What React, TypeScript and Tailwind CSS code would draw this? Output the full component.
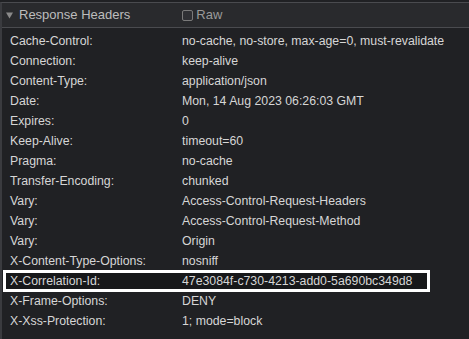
import React from "react";

const rows: [string, string][] = [
  ["Cache-Control:", "no-cache, no-store, max-age=0, must-revalidate"],
  ["Connection:", "keep-alive"],
  ["Content-Type:", "application/json"],
  ["Date:", "Mon, 14 Aug 2023 06:26:03 GMT"],
  ["Expires:", "0"],
  ["Keep-Alive:", "timeout=60"],
  ["Pragma:", "no-cache"],
  ["Transfer-Encoding:", "chunked"],
  ["Vary:", "Access-Control-Request-Headers"],
  ["Vary:", "Access-Control-Request-Method"],
  ["Vary:", "Origin"],
  ["X-Content-Type-Options:", "nosniff"],
  ["X-Correlation-Id:", "47e3084f-c730-4213-add0-5a690bc349d8"],
  ["X-Frame-Options:", "DENY"],
  ["X-Xss-Protection:", "1; mode=block"],
];

export default function App() {
  return (
    <div
      className="w-[469px] h-[339px] bg-[#202124] overflow-hidden pt-[2px]"
      style={{ fontFamily: '"Liberation Sans", Arial, sans-serif' }}
    >
      <div className="h-full border-l-2 border-[#3a3b3f] border-t border-t-[#4a4b4f]">
        <div className="h-[25px] bg-[#292a2d] border-b border-[#4a4b4f] flex items-center text-[13px] text-[#bdbdbd]">
          <svg width="8" height="8" viewBox="0 0 8 8" className="ml-[4px]">
            <path d="M0 1.5 L7 1.5 L3.5 7.5 Z" fill="#8a8a8a" />
          </svg>
          <span className="ml-[5px]">Response Headers</span>
          <span className="ml-[52px] w-[11px] h-[11px] rounded-[2px] border border-[#7a7a7a] bg-[#2f3034]" />
          <span className="ml-[3px] text-[#9a9a9a]">Raw</span>
        </div>
        <div className="pt-[3px] text-[12.3px] text-[#d6d6d6]">
          {rows.map(([k, v], i) => {
            const hl = k === "X-Correlation-Id:";
            return (
              <div
                key={i}
                className={
                  hl
                    ? "flex items-center h-[22px] -my-[1px] ml-[1px] w-[427px] border-[3px] border-white bg-[#17181a] relative z-10"
                    : "flex items-center h-[20px]"
                }
              >
                <span className={hl ? "w-[176px] pl-[4px] shrink-0" : "w-[180px] pl-[8px] shrink-0"}>{k}</span>
                <span>{v}</span>
              </div>
            );
          })}
        </div>
      </div>
    </div>
  );
}
